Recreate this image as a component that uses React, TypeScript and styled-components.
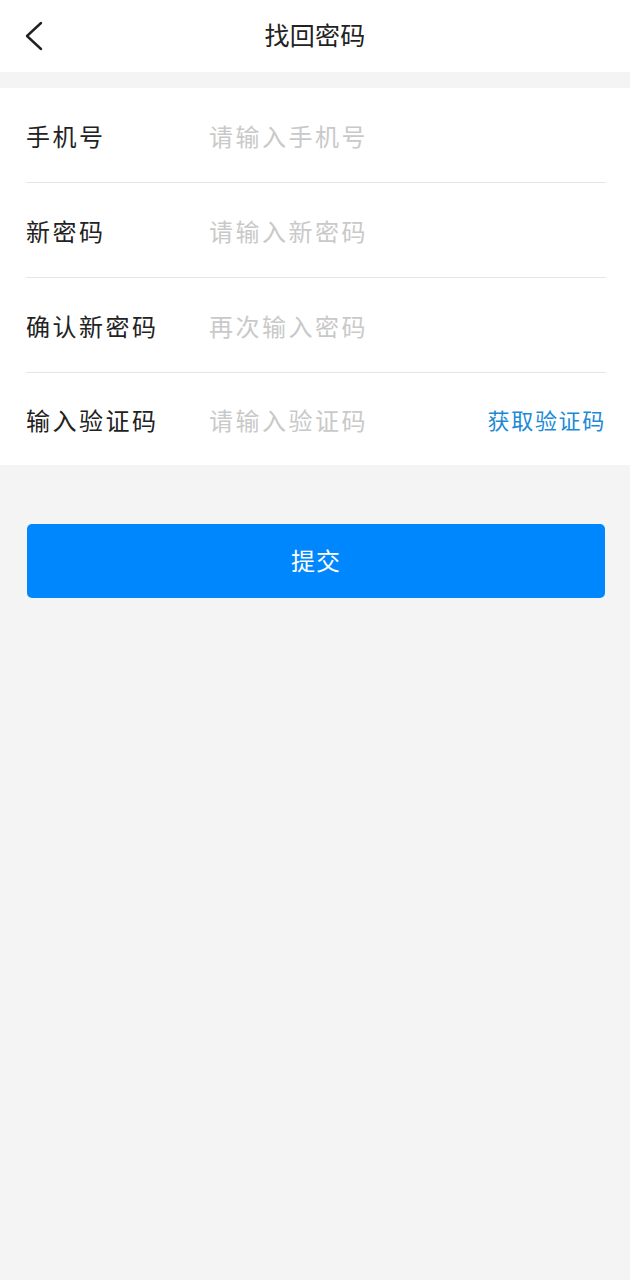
import React from "react";
import styled, { createGlobalStyle } from "styled-components";

const Global = createGlobalStyle`
  html, body { margin: 0; padding: 0; background: #f4f4f4; }
  body { font-family: "Noto Sans CJK SC", "Noto Sans", sans-serif; }
  input::placeholder { color: #c9c9c9; }
`;

const Page = styled.div`
  min-height: 1280px;
  background: #f4f4f4;
  display: flex;
  flex-direction: column;
`;

const Header = styled.header`
  height: 72px;
  background: #fff;
  display: grid;
  grid-template-columns: 72px 1fr 72px;
  align-items: center;
`;

const BackButton = styled.button`
  border: 0;
  background: none;
  padding: 0 0 0 24px;
  height: 72px;
  display: flex;
  align-items: center;
  cursor: pointer;
`;

const Title = styled.h1`
  margin: 0 0 4px;
  text-align: center;
  font-size: 25px;
  font-weight: 400;
  letter-spacing: 0.3px;
  color: #222;
`;

const Form = styled.section`
  margin-top: 16px;
  background: #fff;
  padding: 0 24px 0 26px;
`;

const Row = styled.label<{ $last?: boolean }>`
  height: ${(p) => (p.$last ? "92px" : "94px")};
  display: flex;
  align-items: center;
  border-bottom: ${(p) => (p.$last ? "none" : "1px solid #e6e6e6")};
`;

const Label = styled.span`
  width: 183px;
  flex-shrink: 0;
  font-size: 24px;
  letter-spacing: 2.5px;
  color: #222;
`;

const Input = styled.input`
  flex: 1;
  min-width: 0;
  border: 0;
  outline: none;
  padding: 0;
  font-family: inherit;
  font-size: 24px;
  letter-spacing: 2.5px;
  color: #222;
  background: transparent;
`;

const CodeLink = styled.span`
  font-size: 22px;
  letter-spacing: 1.7px;
  color: #1c8ad6;
  white-space: nowrap;
`;

const Submit = styled.button`
  margin: 59px 25px 0 27px;
  height: 74px;
  border: 0;
  border-radius: 5px;
  background: #0087fe;
  color: #fff;
  font-family: inherit;
  font-size: 24px;
  letter-spacing: 1px;
  padding-bottom: 4px;
`;

export default function App() {
  return (
    <Page>
      <Global />
      <Header>
        <BackButton aria-label="back">
          <svg width="20" height="30" viewBox="0 0 20 30" fill="none">
            <path d="M17 2 L3 15 L17 28" stroke="#222" strokeWidth="2.4" strokeLinecap="round" strokeLinejoin="round" />
          </svg>
        </BackButton>
        <Title>找回密码</Title>
        <div />
      </Header>
      <Form>
        <Row>
          <Label>手机号</Label>
          <Input placeholder="请输入手机号" />
        </Row>
        <Row>
          <Label>新密码</Label>
          <Input type="password" placeholder="请输入新密码" />
        </Row>
        <Row>
          <Label>确认新密码</Label>
          <Input type="password" placeholder="再次输入密码" />
        </Row>
        <Row $last>
          <Label>输入验证码</Label>
          <Input placeholder="请输入验证码" />
          <CodeLink>获取验证码</CodeLink>
        </Row>
      </Form>
      <Submit>提交</Submit>
    </Page>
  );
}
